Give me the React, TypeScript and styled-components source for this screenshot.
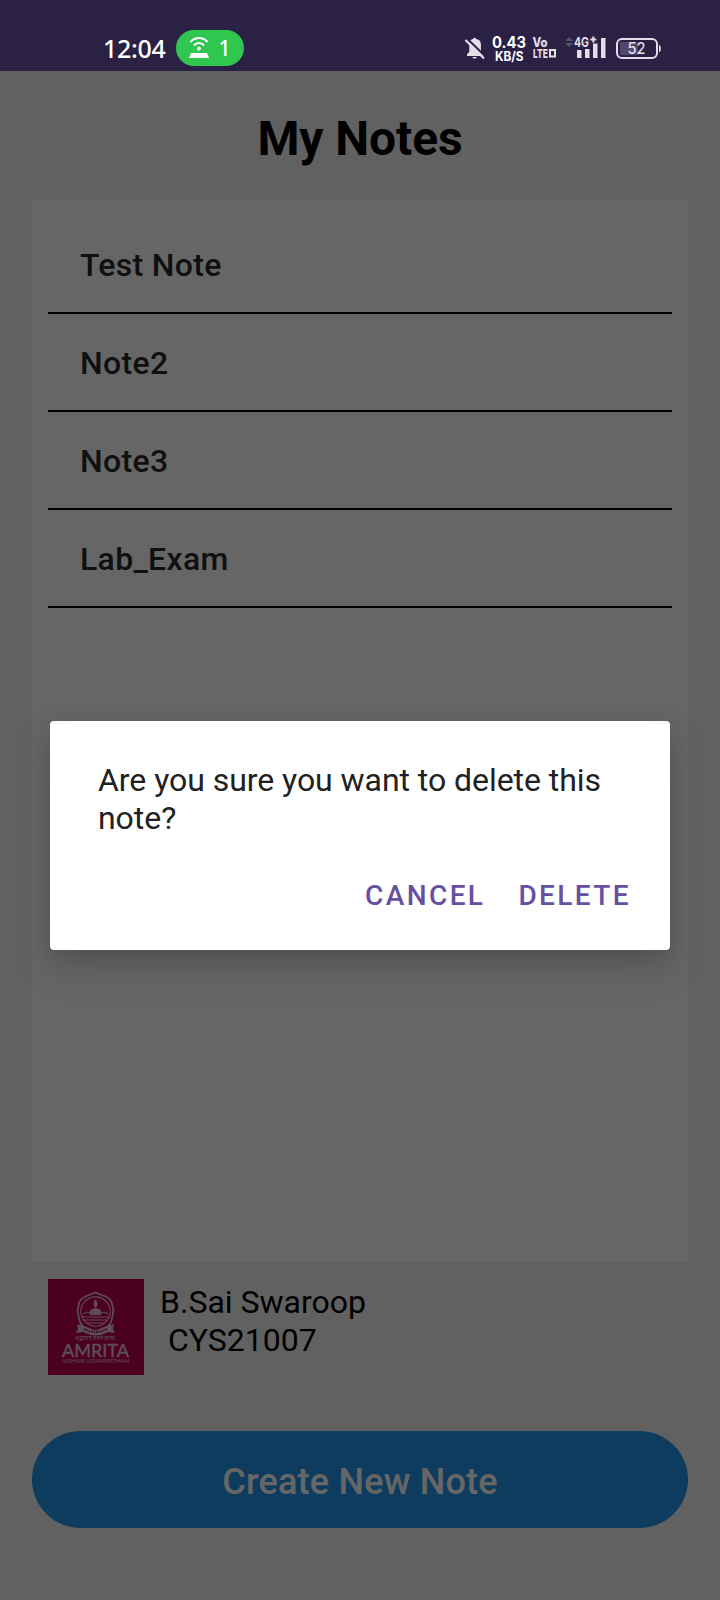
import React from "react";
import styled, { createGlobalStyle } from "styled-components";

const GlobalStyle = createGlobalStyle`
  * { box-sizing: border-box; }
  body { margin: 0; background: #f3f3f3; font-family: Roboto, sans-serif; }
`;

const Screen = styled.div`
  position: relative;
  width: 720px;
  height: 1600px;
  overflow: hidden;
  display: flex;
  flex-direction: column;
  background: #f3f3f3;
`;

const StatusBar = styled.header`
  height: 71px;
  flex: none;
  padding: 26px 58px 0 103px;
  display: flex;
  align-items: flex-start;
  justify-content: space-between;
  background: #2b2144;
  color: #fff;
`;

const StatusGroup = styled.div`
  display: flex;
  align-items: center;
  height: 44px;
`;

const Clock = styled.time`
  width: 73px;
  font: 500 25px/30px "Noto Sans", sans-serif;
  letter-spacing: -0.3px;
`;

const HotspotPill = styled.div`
  display: flex;
  align-items: center;
  justify-content: center;
  gap: 9px;
  width: 68px;
  height: 36px;
  border-radius: 18px;
  background: #30c750;
  font: 500 21px/30px "Noto Sans", sans-serif;
`;

const StatusIcons = styled.svg`
  display: block;
  font-family: Inter, sans-serif;
`;

const Page = styled.main`
  flex: 1;
  min-height: 0;
  padding: 0 32px 72px;
  display: flex;
  flex-direction: column;
`;

const Title = styled.h1`
  margin: 40px 0 33px;
  text-align: center;
  font-size: 48px;
  line-height: 56px;
  font-weight: 700;
  letter-spacing: -0.1px;
  color: #000;
`;

const NoteList = styled.ul`
  flex: 1;
  margin: 0;
  padding: 16px;
  list-style: none;
  background: #fff;
`;

const NoteItem = styled.li`
  height: 98px;
  padding: 1px 32px 0;
  border-bottom: 2px solid #000;
  font-size: 32px;
  line-height: 97px;
  font-weight: 500;
  letter-spacing: 0.32px;
  color: #2a2a2a;
`;

const Profile = styled.section`
  display: flex;
  gap: 16px;
  height: 96px;
  margin: 17px 16px 56px;
`;

const ProfileText = styled.div`
  padding-top: 4px;
  font-size: 32px;
  line-height: 38px;
  color: #000;
`;

const StudentId = styled.div`
  padding-left: 8px;
`;

const CreateButton = styled.button`
  flex: none;
  height: 97px;
  border: 0;
  border-radius: 49px;
  padding: 4px 0 0;
  background: #2196ee;
  color: #fff;
  font: 500 36px/42px Roboto, sans-serif;
  letter-spacing: 0.2px;
`;

const Scrim = styled.div`
  position: absolute;
  inset: 71px 0 0;
  padding: 650px 50px 0;
  background: rgba(0, 0, 0, 0.6);
`;

const Dialog = styled.div`
  height: 229px;
  padding: 40px 30px 0 48px;
  border-radius: 4px;
  background: #fff;
  box-shadow: 0 18px 36px rgba(0, 0, 0, 0.17), 0 2px 20px rgba(0, 0, 0, 0.08);
`;

const Message = styled.p`
  margin: 0;
  font-size: 32px;
  line-height: 38px;
  letter-spacing: -0.05px;
  color: #212121;
`;

const Actions = styled.div`
  display: flex;
  justify-content: flex-end;
  gap: 33px;
  margin-top: 42px;
  padding-right: 9px;
`;

const ActionButton = styled.button`
  border: 0;
  padding: 0;
  background: none;
  color: #6750a0;
  font: 500 28px/34px Roboto, sans-serif;
  letter-spacing: 2.4px;
`;

const HotspotIcon = () => (
  <svg width="20" height="22" viewBox="0 0 20 22" fill="none" stroke="#fff" strokeWidth="2">
    <path d="M1.500 5C6-.2 14-.2 18.500 5M4.800 8.500c3-3.300 7.400-3.300 10.400 0" />
    <circle cx="10" cy="11.500" r="1.900" fill="#fff" stroke="none" />
    <path d="M2 16h16l2 5H0z" fill="#fff" stroke="none" />
  </svg>
);

const Indicators = () => (
  <StatusIcons width="200" height="44" viewBox="462 26 200 44" fill="#e3dfe9">
    <path d="M467 56v-1.800l2.300-2.500v-7.500c0-3.500 1.600-4.800 3.700-5.300a1.700 1.700 0 0 1 3.200 0c3.300.7 4.700 2.500 4.700 5.300v7.500l2.300 2.500V56z" />
    <path d="M472.200 57h4.800q-2.400 3.500-4.800 0z" />
    <path d="M467 38.500 486 57" stroke="#2b2144" strokeWidth="2" />
    <path d="M465.500 40 484 58.500" stroke="#e3dfe9" strokeWidth="2.200" />
    <g fill="#fff" fontWeight="700">
      <text x="492" y="48" fontSize="15.500" textLength="34" lengthAdjust="spacingAndGlyphs">0.43</text>
      <text x="495" y="60.500" fontSize="13" textLength="28.500" lengthAdjust="spacingAndGlyphs">KB/S</text>
    </g>
    <text x="532.500" y="47" fontSize="12.500" fontWeight="800" textLength="15" lengthAdjust="spacingAndGlyphs">Vo</text>
    <text x="533" y="57.500" fontSize="12" fontWeight="800" textLength="15" lengthAdjust="spacingAndGlyphs">LTE</text>
    <path d="M550 50h5v6.500h-5z" fill="none" stroke="#e3dfe9" strokeWidth="2" />
    <path d="m565 41 4-4 4 4zM565 43l4 4 4-4z" fill="#59506d" />
    <text x="574" y="47" fontSize="13" fontWeight="700" textLength="15" lengthAdjust="spacingAndGlyphs">4G</text>
    <path d="M592.300 36.500h2v2h2v2h-2v2h-2v-2h-2v-2h2z" />
    <path d="M577 50h4.500v8H577zM585 49h4.500v9H585zM593 43.500h4.500V58H593zM601 38h4.500v20H601z" />
    <rect x="620" y="42" width="18" height="13" fill="#50476b" />
    <rect x="617" y="39" width="40" height="19" rx="5" fill="none" stroke="#e3dfe9" strokeWidth="2" />
    <path d="M659 45q1.800 0 1.800 3.500t-1.800 3.500z" />
    <text x="627.500" y="54" fontSize="15.500" fontWeight="500" textLength="18" lengthAdjust="spacingAndGlyphs">52</text>
  </StatusIcons>
);

const UniversityLogo = () => (
  <svg width="96" height="96" viewBox="0 0 96 96">
    <path d="M0 0h96v96H0z" fill="#be0050" />
    <g fill="none" stroke="#e7c5d3" strokeWidth="1.100">
      <path d="m47.500 13.500 10 4q4 1.700 6 5l2 9-2 10q-1 4-4 6l-12 5-12-5q-3-2-4-6l-2-10 2-9q2-3.300 6-5z" strokeWidth="1.700" />
      <circle cx="47.500" cy="32.500" r="14.700" />
      <path d="M36 23q11.500-10 23 0" strokeDasharray="1.500 1" />
      <path d="M33 38h29M35 41h25M39 44h17" />
      <path d="M35 35l4-2 3 1M60 35l-4-2-3 1" />
    </g>
    <path d="m29 45 6 2q12 8 25 0l6-2-1 5 2 4-7-1q-12 7-25 0l-7 1 2-4z" fill="#e7c5d3" />
    <path d="M36 50q11.500 6 23 0" fill="none" stroke="#be0050" strokeWidth="2" strokeDasharray="1.500 1" />
    <g fill="#e7c5d3">
      <path d="M47.500 20q4 5 0 9-4-4 0-9zM42 31l5.500-2 5.500 2v5H42z" />
      <text x="27" y="61" fontFamily="Noto Sans, sans-serif" fontSize="5.500" textLength="40" lengthAdjust="spacingAndGlyphs">श्रद्धावान् लभते ज्ञानम्</text>
      <text x="14" y="77.500" fontFamily="Lato, sans-serif" fontSize="17" stroke="#e7c5d3" strokeWidth="0.400" textLength="67" lengthAdjust="spacingAndGlyphs">AMRITA</text>
      <text x="14.500" y="83.700" fontFamily="Lato, sans-serif" fontSize="5.500" textLength="67" lengthAdjust="spacingAndGlyphs">VISHWA VIDYAPEETHAM</text>
    </g>
  </svg>
);

const notes = ["Test Note", "Note2", "Note3", "Lab_Exam"];

export default function App() {
  return (
    <>
      <GlobalStyle />
      <Screen>
        <StatusBar>
          <StatusGroup>
            <Clock>12:04</Clock>
            <HotspotPill>
              <HotspotIcon />
              <span>1</span>
            </HotspotPill>
          </StatusGroup>
          <Indicators />
        </StatusBar>
        <Page>
          <Title>My Notes</Title>
          <NoteList>
            {notes.map((note) => (
              <NoteItem key={note}>{note}</NoteItem>
            ))}
          </NoteList>
          <Profile>
            <UniversityLogo />
            <ProfileText>
              <div>B.Sai Swaroop</div>
              <StudentId>CYS21007</StudentId>
            </ProfileText>
          </Profile>
          <CreateButton>Create New Note</CreateButton>
        </Page>
        <Scrim>
          <Dialog role="dialog">
            <Message>Are you sure you want to delete this note?</Message>
            <Actions>
              <ActionButton>CANCEL</ActionButton>
              <ActionButton>DELETE</ActionButton>
            </Actions>
          </Dialog>
        </Scrim>
      </Screen>
    </>
  );
}
